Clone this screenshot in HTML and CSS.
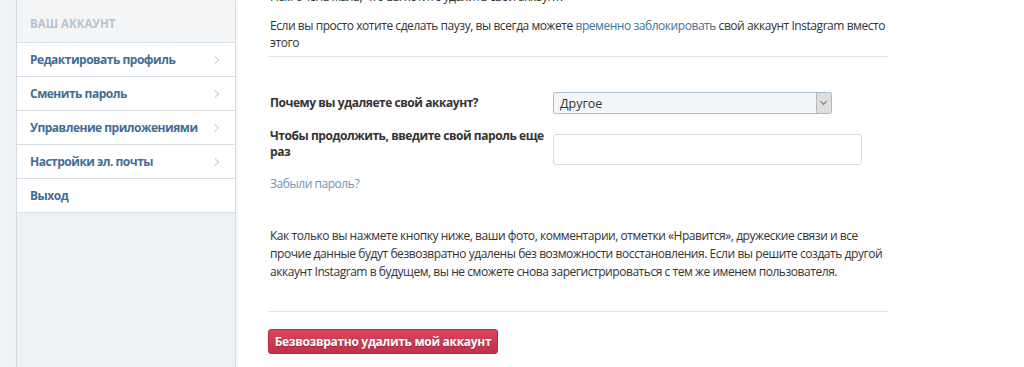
FILE: index.html
```html
<!DOCTYPE html>
<html>
<head>
    <meta charset="utf-8">
    <title>Удалить аккаунт</title>
    <link rel="stylesheet" href="styles.css">
</head>
<body>
    <div class="page">
        <div class="gutter"></div>
        <div class="sidebar">
            <div class="sidebar-title">Ваш аккаунт</div>
            <a class="nav-item" href="#">Редактировать профиль<span class="chevron"></span></a>
            <a class="nav-item" href="#">Сменить пароль<span class="chevron"></span></a>
            <a class="nav-item" href="#">Управление приложениями<span class="chevron"></span></a>
            <a class="nav-item" href="#">Настройки эл. почты<span class="chevron"></span></a>
            <a class="nav-item" href="#">Выход</a>
        </div>
        <div class="main">
            <p class="intro first">Нам очень жаль, что вы хотите удалить свой аккаунт.</p>
            <p class="intro">Если вы просто хотите сделать паузу, вы всегда можете <a href="#" class="link">временно заблокировать</a> свой аккаунт Instagram вместо этого</p>
            <div class="divider"></div>

            <div class="form">
                <div class="form-row">
                    <label class="form-label">Почему вы удаляете свой аккаунт?</label>
                    <div class="select">
                        <span class="select-value">Другое</span>
                        <span class="select-arrow"></span>
                    </div>
                </div>
                <div class="form-row top">
                    <label class="form-label">Чтобы продолжить, введите свой пароль еще раз</label>
                    <input class="input" type="password">
                </div>
                <a href="#" class="forgot">Забыли пароль?</a>
            </div>

            <p class="warning">Как только вы нажмете кнопку ниже, ваши фото, комментарии, отметки «Нравится», дружеские связи и все прочие данные будут безвозвратно удалены без возможности восстановления. Если вы решите создать другой аккаунт Instagram в будущем, вы не сможете снова зарегистрироваться с тем же именем пользователя.</p>
            <div class="divider bottom"></div>

            <button class="delete-btn">Безвозвратно удалить мой аккаунт</button>
        </div>
    </div>
</body>
</html>
```

FILE: styles.css
```css
body {
    margin: 0;
    font-family: 'Open Sans', sans-serif;
    font-size: 12px;
    letter-spacing: -0.45px;
    color: #333333;
    background: #ffffff;
    height: 367px;
    overflow: hidden;
}

.page {
    display: flex;
    height: 367px;
}

.gutter {
    width: 16px;
    background: linear-gradient(to right, #f2f4f7, #eef1f5);
}

/* Left menu */
.sidebar {
    width: 218px;
    background: #edf1f5;
    border-left: 1px solid #d4dbe2;
    border-right: 1px solid #d4dbe2;
    box-shadow: 1px 0 2px rgba(0,0,0,0.06);
    display: flex;
    flex-direction: column;
}

.sidebar-title {
    height: 43px;
    box-sizing: border-box;
    padding: 16px 0 0 13px;
    background: #f4f5f7;
    color: #b8c4cf;
    font-weight: 700;
    font-size: 11.5px;
    letter-spacing: 0;
    text-transform: uppercase;
    border-bottom: 1px solid #d8dfe6;
}

.nav-item {
    display: flex;
    align-items: center;
    justify-content: space-between;
    height: 33px;
    padding: 0 14px 0 13px;
    background: #ffffff;
    border-bottom: 1px solid #d8dfe6;
    color: #3f6d95;
    font-weight: 700;
    font-size: 12px;
    letter-spacing: -0.5px;
    text-decoration: none;
}

.chevron {
    width: 5px;
    height: 5px;
    border-right: 1px solid #cdd3d9;
    border-top: 1px solid #cdd3d9;
    transform: rotate(45deg);
    margin-right: 3px;
}

/* Main content */
.main {
    flex: 1;
    padding: 0 136px 0 32px;
}

.intro {
    margin: 0 0 0 2px;
    line-height: 17px;
}

.intro.first {
    margin-top: -12px;
    margin-bottom: 12px;
}

.link {
    color: #3f729b;
    text-decoration: none;
}

.divider {
    height: 1px;
    background: #e5e5e5;
    margin-top: 5px;
}

.form {
    padding: 35px 0 0 2px;
}

.form-row {
    display: grid;
    grid-template-columns: 283px 1fr;
    align-items: center;
}

.form-row.top {
    align-items: start;
    margin-top: 14px;
}

.form-label {
    font-weight: 700;
    line-height: 16px;
}

.select {
    width: 279px;
    height: 22px;
    box-sizing: border-box;
    display: flex;
    align-items: center;
    justify-content: space-between;
    background: #f2f6f9;
    border: 1px solid #a9bccd;
    border-radius: 2px;
    letter-spacing: 0;
}

.select-value {
    padding-left: 6px;
    font-size: 12.5px;
}

.select-arrow {
    width: 14px;
    height: 20px;
    background: #dedede;
    border-left: 1px solid #b8b8b8;
    position: relative;
}

.select-arrow::after {
    content: "";
    position: absolute;
    left: 4px;
    top: 6px;
    width: 4px;
    height: 4px;
    border-right: 1px solid #777;
    border-bottom: 1px solid #777;
    transform: rotate(45deg);
}

.input {
    margin-top: 6px;
    width: 309px;
    height: 31px;
    box-sizing: border-box;
    border: 1px solid #dcdcdc;
    border-radius: 3px;
    background: #ffffff;
}

.forgot {
    display: block;
    color: #6d96b8;
    text-decoration: none;
    margin-top: 10px;
    line-height: 17px;
}

.warning {
    margin: 35px 0 0 2px;
    line-height: 18px;
}

.divider.bottom {
    margin-top: 30px;
}

.delete-btn {
    margin-top: 17px;
    width: 230px;
    height: 25px;
    padding: 0;
    border: 1px solid #b5283e;
    border-radius: 3px;
    background: linear-gradient(to bottom, #d9455d, #c4304a);
    color: #ffffff;
    font-family: 'Open Sans', sans-serif;
    font-weight: 700;
    font-size: 12px;
    letter-spacing: -0.3px;
    text-shadow: 0 1px 1px rgba(0,0,0,0.3);
    cursor: pointer;
}
```
